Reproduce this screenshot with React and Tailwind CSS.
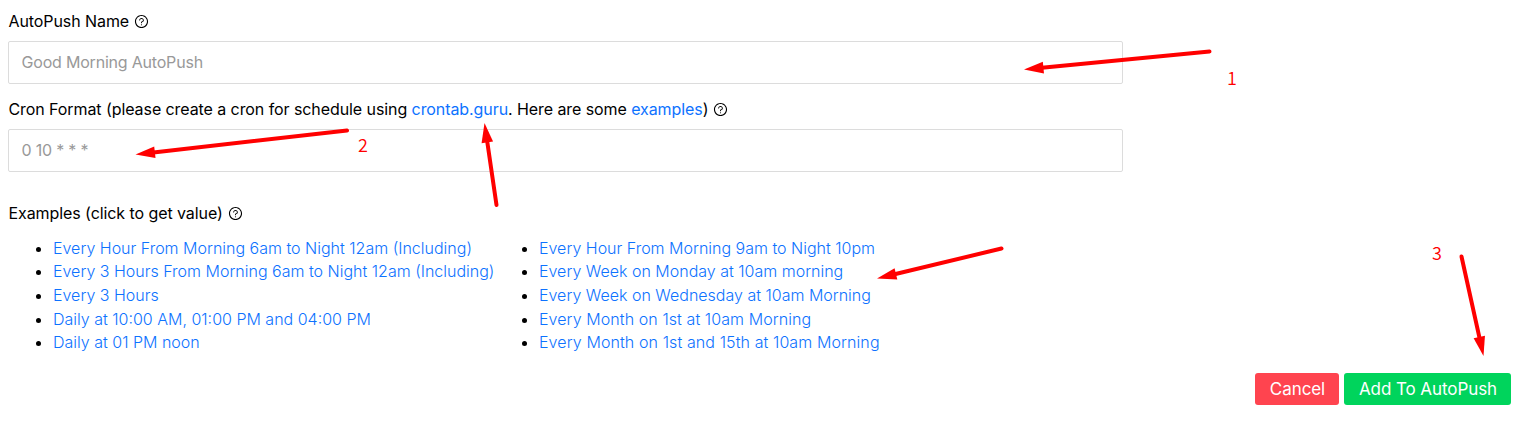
import React from "react";
import { AiOutlineQuestionCircle } from "react-icons/ai";

const hourly = [
  { text: "Every Hour From Morning 6am to Night 12am (Including)" },
  { text: "Every 3 Hours From Morning 6am to Night 12am (Including)" },
  { text: "Every 3 Hours" },
  { text: "Daily at 10:00 AM, 01:00 PM and 04:00 PM" },
  { text: "Daily at 01 PM noon" },
];

const recurring = [
  { text: "Every Hour From Morning 9am to Night 10pm" },
  { text: "Every Week on Monday at 10am morning" },
  { text: "Every Week on Wednesday at 10am Morning" },
  { text: "Every Month on 1st at 10am Morning", spacing: "tracking-[0.08px]" },
  { text: "Every Month on 1st and 15th at 10am Morning", spacing: "tracking-[0.1px]" },
];

const arrows = [
  { tail: [1209.5, 51.5], tip: [1024, 69.5] },
  { tail: [347, 130.5], tip: [135.5, 154.5] },
  { tail: [496.5, 205], tip: [484.5, 123] },
  { tail: [1001.5, 248.5], tip: [877, 278.5] },
  { tail: [1461.5, 256.5], tip: [1483.5, 356] },
];

function Label({ children }) {
  return (
    <div className="flex h-6 items-center gap-[5px] whitespace-pre pl-[0.5px] text-[16px] tracking-[-0.08px]">
      <span>{children}</span>
      <AiOutlineQuestionCircle className="size-[15px]" />
    </div>
  );
}

function ExampleList({ items }) {
  return (
    <ul className="list-disc pl-[45px] text-[16px] leading-[23.6px] font-light whitespace-nowrap">
      {items.map(({ text, spacing = "tracking-normal" }) => (
        <li key={text}>
          <a className={`text-[#0d72ff] ${spacing}`}>{text}</a>
        </li>
      ))}
    </ul>
  );
}

function Arrow({ tail, tip }) {
  const dx = tip[0] - tail[0];
  const dy = tip[1] - tail[1];
  const length = Math.hypot(dx, dy);
  const angle = (Math.atan2(dy, dx) * 180) / Math.PI;
  return (
    <g transform={`translate(${tail[0]} ${tail[1]}) rotate(${angle})`}>
      <line x1="0" y1="0" x2={length - 18} y2="0" stroke="#ff0000" strokeWidth="4" strokeLinecap="round" />
      <path d={`M${length} 0L${length - 19.5} -5.8V5.8Z`} fill="#ff0000" />
    </g>
  );
}

function Step({ className, children }) {
  return (
    <span className={`absolute font-['Noto_Sans_CJK_SC',sans-serif] text-[18px] leading-6 font-[350] text-[#ff0000] ${className}`}>
      {children}
    </span>
  );
}

const inputClass =
  "block h-[43px] w-full rounded-[2px] border border-[#dcdcdc] bg-white px-[12.5px] pb-[2px] text-[16px] tracking-[-0.2px] text-black outline-none placeholder:text-[#999999]";

export default function App() {
  return (
    <div className="relative h-[434px] overflow-hidden bg-white px-2 pt-[9px] font-['Inter',sans-serif] text-black">
      <div className="w-[1115px]">
        <Label>AutoPush Name</Label>
        <div className="pt-2">
          <input className={inputClass} placeholder="Good Morning AutoPush" />
        </div>
        <div className="pt-[13px]">
          <Label>
            Cron Format (please create a cron for schedule using <a className="text-[#0d72ff]">crontab.guru</a>. Here are some{" "}
            <a className="text-[#0d72ff]">examples</a>)
          </Label>
        </div>
        <div className="pt-2">
          <input className={inputClass} placeholder="0 10 * * *" />
        </div>
        <div className="pt-[29px]">
          <Label>Examples (click to get value)</Label>
        </div>
      </div>
      <div className="flex h-[130px] pt-[11.8px]">
        <div className="w-[486px]">
          <ExampleList items={hourly} />
        </div>
        <ExampleList items={recurring} />
      </div>
      <div className="flex justify-end gap-[5px] pt-[18px] pr-[6px] text-[17px] tracking-[-0.07px]">
        <button className="h-8 w-[84px] rounded-[3px] bg-[#ff444f] pt-px pl-px text-white">Cancel</button>
        <button className="h-8 w-[167px] rounded-[3px] bg-[#00d45c] pt-px pl-px text-white">Add To AutoPush</button>
      </div>
      <svg className="pointer-events-none absolute top-0 left-0" width="1525" height="434">
        {arrows.map((arrow, index) => (
          <Arrow key={index} {...arrow} />
        ))}
      </svg>
      <Step className="top-[65px] left-[1227px]">1</Step>
      <Step className="top-[132px] left-[358px]">2</Step>
      <Step className="top-[240px] left-[1432px]">3</Step>
    </div>
  );
}
